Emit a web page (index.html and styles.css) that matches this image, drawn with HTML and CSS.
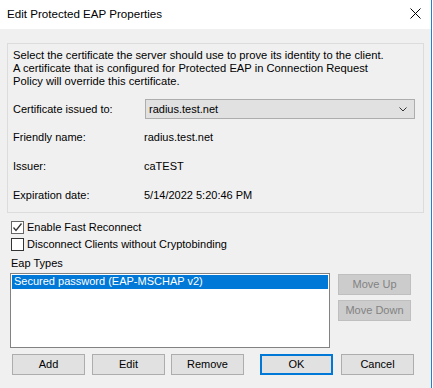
FILE: index.html
```html
<!DOCTYPE html>
<html>
<head>
<meta charset="utf-8">
<link rel="stylesheet" href="styles.css">
</head>
<body>
<div class="window">
  <div class="titlebar">
    <span class="title">Edit Protected EAP Properties</span>
    <svg class="close" width="11" height="11" viewBox="0 0 11 11"><path d="M0.5 0.5L10.5 10.5M10.5 0.5L0.5 10.5" stroke="#000" stroke-width="1" fill="none"/></svg>
  </div>
  <div class="content">
    <div class="group">
      <p class="intro">Select the certificate the server should use to prove its identity to the client.<br>A certificate that is configured for Protected EAP in Connection Request<br>Policy will override this certificate.</p>
      <div class="fields">
        <span class="label combo-label">Certificate issued to:</span>
        <div class="combo">
          <span>radius.test.net</span>
          <svg class="chev" width="8" height="5" viewBox="0 0 8 5"><path d="M0.5 0.5L4 4L7.5 0.5" stroke="#333" stroke-width="1" fill="none"/></svg>
        </div>
        <span class="label">Friendly name:</span>
        <span class="value">radius.test.net</span>
        <span class="label">Issuer:</span>
        <span class="value">caTEST</span>
        <span class="label">Expiration date:</span>
        <span class="value">5/14/2022 5:20:46 PM</span>
      </div>
    </div>
    <div class="checks">
      <label class="check"><span class="box checked"><svg width="11" height="11" viewBox="0 0 11 11"><path d="M1.5 5.5L4 8.5L9.5 1.5" stroke="#333" stroke-width="1.3" fill="none"/></svg></span>Enable Fast Reconnect</label>
      <label class="check"><span class="box"></span>Disconnect Clients without Cryptobinding</label>
    </div>
    <div class="eap-label">Eap Types</div>
    <div class="eap-row">
      <div class="listbox">
        <div class="item selected">Secured password (EAP-MSCHAP v2)</div>
      </div>
      <div class="side-buttons">
        <button class="btn disabled">Move Up</button>
        <button class="btn disabled">Move Down</button>
      </div>
    </div>
    <div class="bottom">
      <button class="btn b-add">Add</button>
      <button class="btn b-edit">Edit</button>
      <button class="btn b-remove">Remove</button>
      <button class="btn default b-ok">OK</button>
      <button class="btn b-cancel">Cancel</button>
    </div>
  </div>
</div>
</body>
</html>
```

FILE: styles.css
```css
* { box-sizing: border-box; }
html, body { margin: 0; padding: 0; background: #ffffff; }
body {
  font-family: "Liberation Sans", Arial, sans-serif;
  font-size: 11px;
  color: #000;
  width: 433px;
  height: 388px;
  overflow: hidden;
}
.window {
  width: 432px;
  height: 388px;
  background: #f0f0f0;
  border-right: 1px solid #1883d7;
  display: flex;
  flex-direction: column;
}
.titlebar {
  height: 29px;
  background: #ffffff;
  display: flex;
  align-items: center;
  justify-content: space-between;
  padding: 0 10px 0 7px;
  flex: none;
}
.title {
  font-size: 11.6px;
  color: #000;
  position: relative;
  top: -1px;
}
.close { display: block; margin-top: -2px; }
.content {
  padding: 14px 0 0 0;
}
.group {
  margin-left: 7px;
  width: 417px;
  height: 170px;
  border: 1px solid #dcdcdc;
  padding: 5px 0 0 5px;
}
.intro {
  margin: 0;
  line-height: 13px;
  height: 39px;
  font-size: 11.2px;
}
.fields {
  margin-top: 11px;
  display: grid;
  grid-template-columns: 132px 270px;
  grid-template-rows: 20px 25px 29px 29px;
  align-items: end;
  line-height: 13px;
}
.fields .combo-label { align-self: center; }
.combo {
  height: 20px;
  background: #e1e1e1;
  border: 1px solid #adadad;
  display: flex;
  align-items: center;
  justify-content: space-between;
  padding: 0 7px 0 3px;
}
.chev { display: block; }
.value { margin-left: -1px; }
.checks {
  margin-top: 8px;
  margin-left: 11px;
  display: flex;
  flex-direction: column;
  gap: 4px;
}
.check {
  display: flex;
  align-items: center;
  height: 13px;
  gap: 3px;
  line-height: 13px;
}
.box {
  width: 13px;
  height: 13px;
  background: #fff;
  border: 1px solid #333;
  display: flex;
  align-items: center;
  justify-content: center;
  flex: none;
}
.box.checked { border-color: #666; }
.box svg { display: block; }
.eap-label {
  margin-left: 11px;
  margin-top: 6px;
  line-height: 13px;
  height: 13px;
}
.eap-row {
  display: flex;
  margin-top: 3px;
  margin-left: 10px;
  gap: 8px;
}
.listbox {
  width: 320px;
  height: 75px;
  background: #fff;
  border: 1px solid #828282;
  padding: 1px;
}
.item {
  height: 14px;
  line-height: 13px;
  padding-left: 2px;
}
.item.selected { background: #0078d7; color: #fff; }
.side-buttons {
  display: flex;
  flex-direction: column;
  gap: 5px;
  padding-top: 1px;
}
.btn {
  font-family: "Liberation Sans", Arial, sans-serif;
  font-size: 11px;
  width: 73px;
  height: 21px;
  background: #e1e1e1;
  border: 1px solid #adadad;
  color: #000;
  padding: 0;
  margin: 0;
  line-height: 13px;
}
.btn.disabled {
  background: #cccccc;
  border-color: #bfbfbf;
  color: #838383;
}
.btn.default { border: 2px solid #0078d7; }
.bottom {
  display: flex;
  margin-top: 6px;
  padding-left: 12px;
}
.b-edit { margin-left: 7px; }
.b-remove { margin-left: 6px; }
.b-ok { margin-left: 16px; }
.b-cancel { margin-left: 8px; }
```
